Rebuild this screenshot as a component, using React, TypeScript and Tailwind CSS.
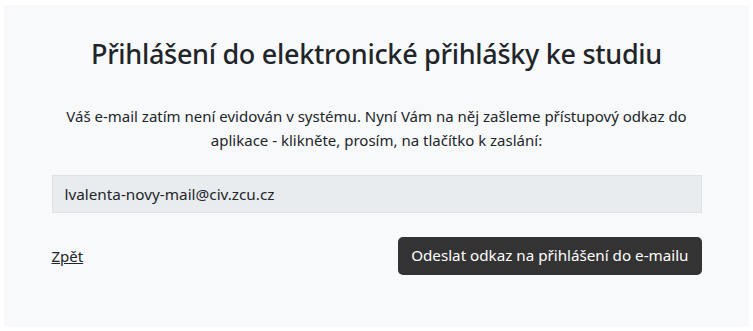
export default function App() {
  return (
    <div className="min-h-screen bg-white pt-[5px] px-[4px] pb-[4px] font-['Noto_Sans',sans-serif] text-[#212529]">
      <div className="h-[322px] bg-[#f8f9fa] flex flex-col items-center pt-[33px]">
        <div className="w-[650px]">
          <h2 className="text-center text-[27px] leading-[1.2] font-medium tracking-[-0.3px]">
            Přihlášení do elektronické přihlášky ke studiu
          </h2>
          <p className="mt-[35px] text-center text-[15px] leading-[1.55]">
            Váš e-mail zatím není evidován v systému. Nyní Vám na něj zašleme přístupový odkaz do
            aplikace - klikněte, prosím, na tlačítko k zaslání:
          </p>
          <input
            type="email"
            disabled
            value="lvalenta-novy-mail@civ.zcu.cz"
            className="mt-[23px] block w-full h-[38px] px-[12px] text-[15.3px] bg-[#e9ecef] border border-[#dee2e6] text-[#212529] outline-none"
          />
          <div className="mt-[24px] flex items-center justify-between">
            <a href="#" className="text-[15px] underline text-[#212529]">
              Zpět
            </a>
            <button
              type="button"
              className="h-[38px] px-[13px] rounded-[5px] bg-[#333333] text-white text-[15.2px]"
            >
              Odeslat odkaz na přihlášení do e-mailu
            </button>
          </div>
        </div>
      </div>
    </div>
  );
}
